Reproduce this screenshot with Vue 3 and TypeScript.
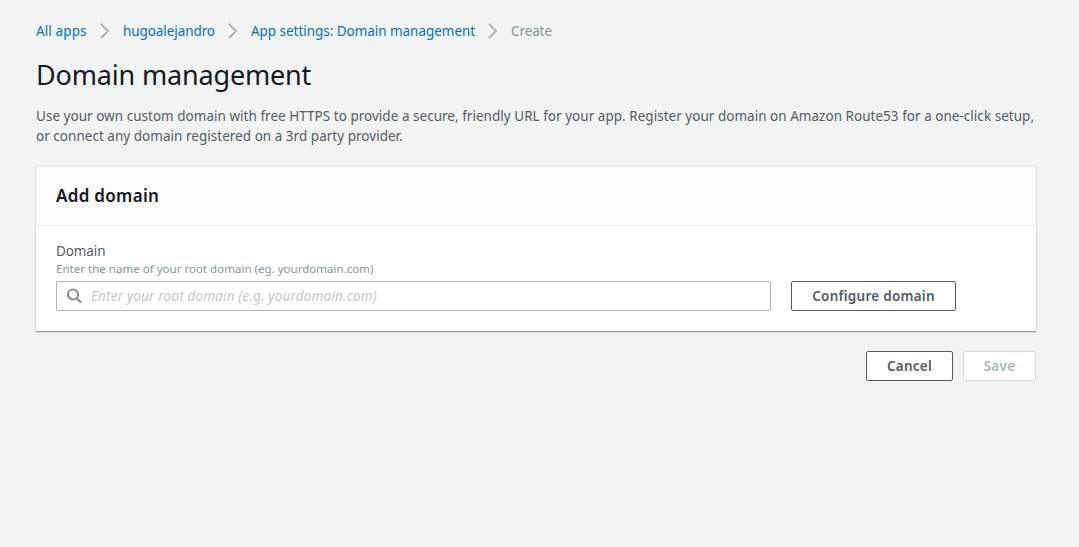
<script setup lang="ts">
const crumbs: { label: string; cls: string }[] = [
  { label: 'All apps', cls: 'crumb-apps' },
  { label: 'hugoalejandro', cls: 'crumb-name' },
  { label: 'App settings: Domain management', cls: 'crumb-settings' },
]
</script>

<template>
  <main class="page">
    <nav class="crumbs" aria-label="Breadcrumbs">
      <template v-for="crumb in crumbs" :key="crumb.label">
        <a class="crumb" :class="crumb.cls" href="#">{{ crumb.label }}</a>
        <svg class="chevron" viewBox="0 0 10 16" aria-hidden="true">
          <path d="M1 1l7 7-7 7" />
        </svg>
      </template>
      <span class="current">Create</span>
    </nav>

    <h1 class="title">Domain management</h1>
    <p class="intro">
      <span>Use your own custom domain with free HTTPS to provide a secure, friendly URL for your app. Register your domain on Amazon Route53 for a one-click setup,</span>
      <span>or connect any domain registered on a 3rd party provider.</span>
    </p>

    <section class="card">
      <header class="card-head"><h2>Add domain</h2></header>
      <div class="card-body">
        <label class="label" for="domain">Domain</label>
        <div class="hint">Enter the name of your root domain (eg. yourdomain.com)</div>
        <div class="row">
          <div class="field">
            <svg class="search" viewBox="0 0 16 16" aria-hidden="true">
              <circle cx="6" cy="6.5" r="5" />
              <path d="M9.7 10.2l4.4 4.4" />
            </svg>
            <input id="domain" type="text" placeholder="Enter your root domain (e.g. yourdomain.com)" />
          </div>
          <button class="btn configure" type="button">Configure domain</button>
        </div>
      </div>
    </section>

    <div class="actions">
      <button class="btn cancel" type="button">Cancel</button>
      <button class="btn save" type="button" disabled>Save</button>
    </div>
  </main>
</template>

<style>
html,
body {
  background: #f2f4f4;
}
</style>

<style scoped>
.page {
  box-sizing: border-box;
  min-height: 547px;
  padding: 21px 43px 0 36px;
  background: #f2f4f4;
  color: #545b64;
  font: 13.5px/20px 'Noto Sans', 'Open Sans', sans-serif;
}
.crumbs {
  display: flex;
  align-items: center;
  height: 20px;
  letter-spacing: -0.04px;
  white-space: nowrap;
}
.crumb {
  color: #0073bb;
  text-decoration: none;
}
.crumb-apps { width: 51px; letter-spacing: 0.12px; }
.crumb-name { width: 92px; letter-spacing: -0.08px; }
.crumb-settings { width: 224px; }
.chevron {
  width: 10px;
  height: 16px;
  margin: 0 13px;
  fill: none;
  stroke: #aab7b8;
  stroke-width: 2;
}
.current {
  color: #879596;
  letter-spacing: -0.1px;
}
.title {
  margin: 16px 0 0;
  color: #16191f;
  font-size: 27px;
  font-weight: 400;
  line-height: 36px;
  letter-spacing: -0.17px;
}
.intro {
  margin: 13px 0 0;
  letter-spacing: 0.026px;
  white-space: nowrap;
}
.intro span { display: block; }
.card {
  margin-top: 20px;
  background: #fff;
  box-shadow: 0 1px 1px 0 rgba(0, 28, 36, 0.34), 1px 1px 1px 0 rgba(0, 28, 36, 0.05), -1px 1px 1px 0 rgba(0, 28, 36, 0.05);
}
.card-head {
  box-sizing: border-box;
  height: 60px;
  padding: 19px 20px;
  background: #fafafa;
  border-top: 1px solid #eaeded;
  border-bottom: 1px solid #eaeded;
}
.card-head h2 {
  margin: 0;
  color: #16191f;
  font-size: 17px;
  font-weight: 600;
  line-height: 20px;
  letter-spacing: 0.3px;
}
.card-body {
  box-sizing: border-box;
  height: 105px;
  padding: 15px 20px 20px;
}
.label {
  display: block;
  line-height: 20px;
  letter-spacing: -0.1px;
}
.hint {
  margin-bottom: 4px;
  color: #879596;
  font-size: 11.5px;
  line-height: 16px;
  letter-spacing: 0.02px;
}
.row {
  display: flex;
  gap: 20px;
}
.field {
  box-sizing: border-box;
  display: flex;
  align-items: center;
  width: 715px;
  height: 30px;
  padding: 0 10px;
  border: 1px solid #aab7b8;
  border-radius: 2px;
  background: #fff;
}
.search {
  width: 16px;
  height: 16px;
  margin-right: 8px;
  fill: none;
  stroke: #879196;
  stroke-width: 2.2;
}
input {
  flex: 1;
  min-width: 0;
  padding: 0;
  border: 0;
  outline: 0;
  background: transparent;
  font: italic 13.5px/20px 'Noto Sans', sans-serif;
  letter-spacing: 0.17px;
}
input::placeholder {
  color: #c2c9ca;
  opacity: 1;
}
.btn {
  box-sizing: border-box;
  height: 30px;
  padding: 0;
  border: 1px solid #545b64;
  border-radius: 2px;
  background: #fff;
  color: #545b64;
  font: 600 13.5px/20px 'Noto Sans', sans-serif;
  letter-spacing: 0.25px;
  white-space: nowrap;
}
.configure { width: 165px; }
.actions {
  display: flex;
  justify-content: flex-end;
  gap: 10px;
  margin-top: 20px;
}
.cancel { width: 87px; }
.save {
  width: 73px;
  border-color: #d5dbdb;
  color: #aab7b8;
}
</style>
